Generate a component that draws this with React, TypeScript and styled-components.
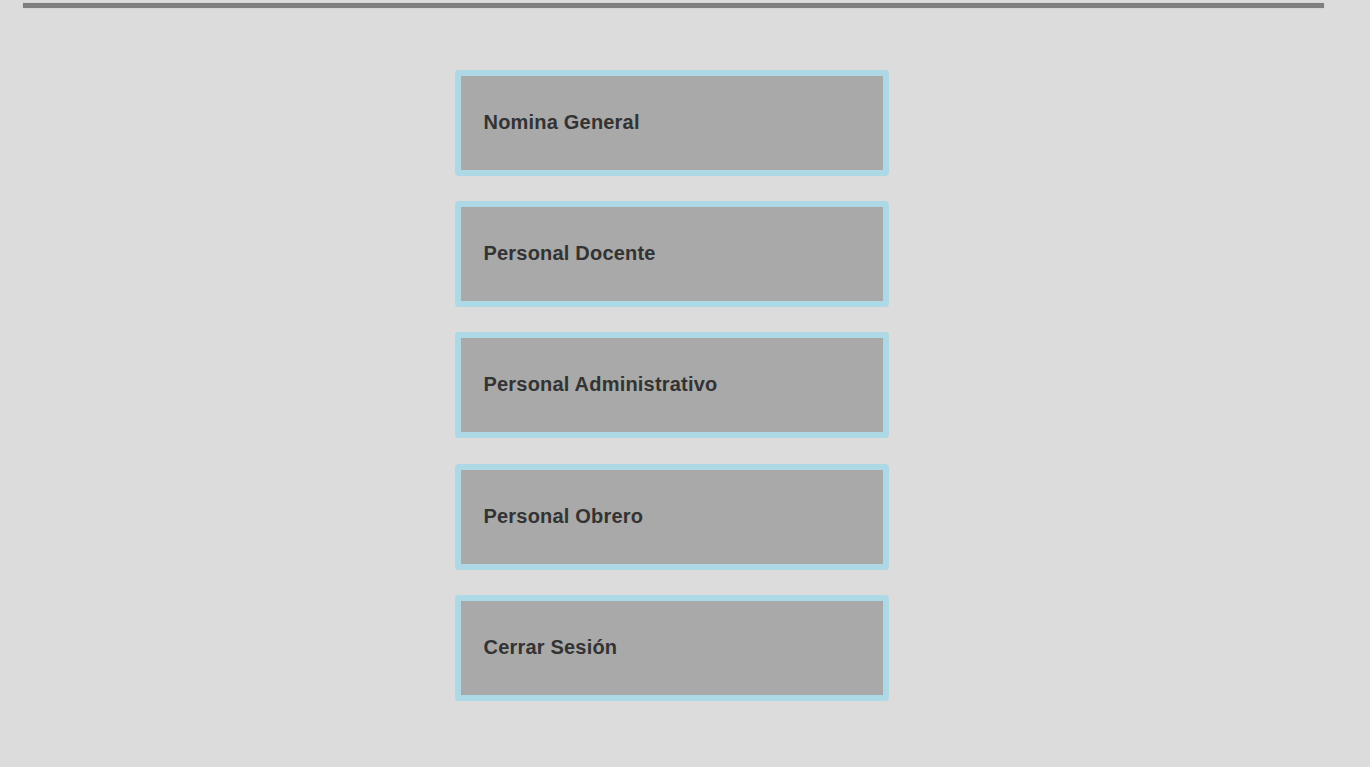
import React from "react";
import styled, { createGlobalStyle } from "styled-components";

const Global = createGlobalStyle`
  html, body { margin: 0; padding: 0; background: #dcdcdc; }
  body { font-family: "Liberation Sans", Arial, sans-serif; }
`;

const Page = styled.div`
  width: 1301px;
  margin-left: 23px;
  padding-top: 3px;
  min-height: 764px;
`;

const Rule = styled.div`
  height: 5px;
  background: #7f7f7f;
  box-shadow: 0 0 1px #b0b0b0;
`;

const Menu = styled.nav`
  display: flex;
  flex-direction: column;
  align-items: center;
  gap: 25px;
  margin-top: 62px;
  padding-right: 4px;
`;

const MenuButton = styled.button`
  box-sizing: border-box;
  width: 434px;
  height: 106px;
  border: 6px solid #add8e6;
  border-radius: 4px;
  background: #a9a9a9;
  color: #333333;
  font-family: "Liberation Sans", Arial, sans-serif;
  font-weight: bold;
  font-size: 20px;
  letter-spacing: 0.2px;
  text-align: left;
  padding: 0 0 2px 23px;
  cursor: pointer;
  &:nth-child(4) {
    margin-top: 1px;
  }
`;

const items = [
  "Nomina General",
  "Personal Docente",
  "Personal Administrativo",
  "Personal Obrero",
  "Cerrar Sesión",
];

export default function App() {
  return (
    <>
      <Global />
      <Page>
        <Rule />
        <Menu>
          {items.map((t) => (
            <MenuButton key={t}>{t}</MenuButton>
          ))}
        </Menu>
      </Page>
    </>
  );
}
